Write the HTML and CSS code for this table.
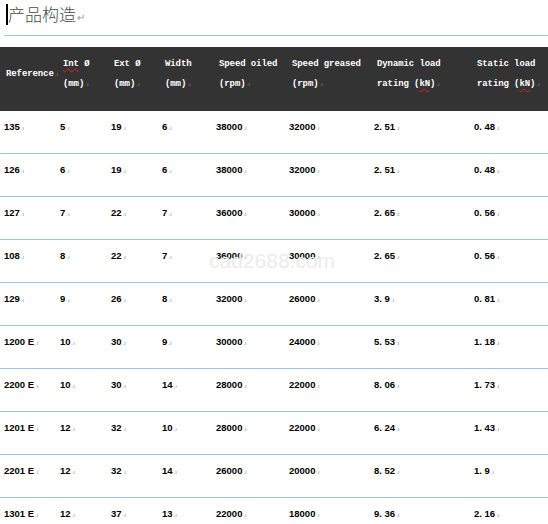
FILE: index.html
```html
<!DOCTYPE html>
<html>
<head>
<meta charset="utf-8">
<link rel="stylesheet" href="styles.css">
</head>
<body>
<div class="doc">
  <div class="title"><span class="caret"></span>产品构造<span class="ret">↵</span></div>
  <div class="table">
    <div class="row head">
      <div class="c single">Reference<span class="m">.ı</span></div>
      <div class="c"><span class="sp">Int</span> Ø<br>(mm)<span class="m">.ı</span></div>
      <div class="c">Ext Ø<br>(mm)<span class="m">.ı</span></div>
      <div class="c">Width<br>(mm)<span class="m">.ı</span></div>
      <div class="c">Speed oiled<br>(rpm)<span class="m">.ı</span></div>
      <div class="c">Speed greased<br>(rpm)<span class="m">.ı</span></div>
      <div class="c">Dynamic load<br>rating (<span class="sp">kN</span>)<span class="m">.ı</span></div>
      <div class="c">Static load<br>rating (<span class="sp">kN</span>)<span class="m">.ı</span></div>
    </div>
    <div class="row"><div class="c">135<span class="m">.ı</span></div><div class="c">5<span class="m">.ı</span></div><div class="c">19<span class="m">.ı</span></div><div class="c">6<span class="m">.ı</span></div><div class="c">38000<span class="m">.ı</span></div><div class="c">32000<span class="m">.ı</span></div><div class="c">2. 51<span class="m">.ı</span></div><div class="c">0. 48<span class="m">.ı</span></div></div>
    <div class="row"><div class="c">126<span class="m">.ı</span></div><div class="c">6<span class="m">.ı</span></div><div class="c">19<span class="m">.ı</span></div><div class="c">6<span class="m">.ı</span></div><div class="c">38000<span class="m">.ı</span></div><div class="c">32000<span class="m">.ı</span></div><div class="c">2. 51<span class="m">.ı</span></div><div class="c">0. 48<span class="m">.ı</span></div></div>
    <div class="row"><div class="c">127<span class="m">.ı</span></div><div class="c">7<span class="m">.ı</span></div><div class="c">22<span class="m">.ı</span></div><div class="c">7<span class="m">.ı</span></div><div class="c">36000<span class="m">.ı</span></div><div class="c">30000<span class="m">.ı</span></div><div class="c">2. 65<span class="m">.ı</span></div><div class="c">0. 56<span class="m">.ı</span></div></div>
    <div class="row"><div class="c">108<span class="m">.ı</span></div><div class="c">8<span class="m">.ı</span></div><div class="c">22<span class="m">.ı</span></div><div class="c">7<span class="m">.ı</span></div><div class="c">36000<span class="m">.ı</span></div><div class="c">30000<span class="m">.ı</span></div><div class="c">2. 65<span class="m">.ı</span></div><div class="c">0. 56<span class="m">.ı</span></div></div>
    <div class="row"><div class="c">129<span class="m">.ı</span></div><div class="c">9<span class="m">.ı</span></div><div class="c">26<span class="m">.ı</span></div><div class="c">8<span class="m">.ı</span></div><div class="c">32000<span class="m">.ı</span></div><div class="c">26000<span class="m">.ı</span></div><div class="c">3. 9<span class="m">.ı</span></div><div class="c">0. 81<span class="m">.ı</span></div></div>
    <div class="row"><div class="c">1200 E<span class="m">.ı</span></div><div class="c">10<span class="m">.ı</span></div><div class="c">30<span class="m">.ı</span></div><div class="c">9<span class="m">.ı</span></div><div class="c">30000<span class="m">.ı</span></div><div class="c">24000<span class="m">.ı</span></div><div class="c">5. 53<span class="m">.ı</span></div><div class="c">1. 18<span class="m">.ı</span></div></div>
    <div class="row"><div class="c">2200 E<span class="m">.ı</span></div><div class="c">10<span class="m">.ı</span></div><div class="c">30<span class="m">.ı</span></div><div class="c">14<span class="m">.ı</span></div><div class="c">28000<span class="m">.ı</span></div><div class="c">22000<span class="m">.ı</span></div><div class="c">8. 06<span class="m">.ı</span></div><div class="c">1. 73<span class="m">.ı</span></div></div>
    <div class="row"><div class="c">1201 E<span class="m">.ı</span></div><div class="c">12<span class="m">.ı</span></div><div class="c">32<span class="m">.ı</span></div><div class="c">10<span class="m">.ı</span></div><div class="c">28000<span class="m">.ı</span></div><div class="c">22000<span class="m">.ı</span></div><div class="c">6. 24<span class="m">.ı</span></div><div class="c">1. 43<span class="m">.ı</span></div></div>
    <div class="row"><div class="c">2201 E<span class="m">.ı</span></div><div class="c">12<span class="m">.ı</span></div><div class="c">32<span class="m">.ı</span></div><div class="c">14<span class="m">.ı</span></div><div class="c">26000<span class="m">.ı</span></div><div class="c">20000<span class="m">.ı</span></div><div class="c">8. 52<span class="m">.ı</span></div><div class="c">1. 9<span class="m">.ı</span></div></div>
    <div class="row"><div class="c">1301 E<span class="m">.ı</span></div><div class="c">12<span class="m">.ı</span></div><div class="c">37<span class="m">.ı</span></div><div class="c">13<span class="m">.ı</span></div><div class="c">22000<span class="m">.ı</span></div><div class="c">18000<span class="m">.ı</span></div><div class="c">9. 36<span class="m">.ı</span></div><div class="c">2. 16<span class="m">.ı</span></div></div>
  </div>
  <div class="wm">cad2688.com</div>
</div>
</body>
</html>
```

FILE: styles.css
```css
html, body {
  margin: 0;
  padding: 0;
  background: #ffffff;
  overflow: hidden;
}
.doc {
  position: relative;
  width: 548px;
  height: 524px;
  overflow: hidden;
}
.title {
  margin-left: 4px;
  height: 35px;
  border-bottom: 1px solid #9dc3e6;
  display: flex;
  align-items: flex-start;
  font-family: "Noto Sans CJK SC", sans-serif;
  font-size: 17px;
  line-height: 28px;
  color: #4a4a4a;
  font-weight: 300;
}
.caret {
  display: inline-block;
  width: 2px;
  height: 21px;
  background: #000;
  margin: 4px 0 0 2px;
}
.ret {
  font-size: 10px;
  color: #999;
  margin-left: 1px;
  line-height: 34px;
}
.table {
  margin-top: 11px;
}
.row {
  display: grid;
  grid-template-columns: 56px 51px 51px 54px 73px 85px 100px 1fr;
  padding-left: 4px;
  height: 42px;
  border-bottom: 1px solid #9dc3e6;
  box-sizing: content-box;
}
.row .c {
  padding-top: 9px;
  font-family: "Liberation Sans", Arial, sans-serif;
  font-weight: bold;
  font-size: 9.5px;
  line-height: 14px;
  color: #000;
  white-space: nowrap;
}
.row.head {
  background: #333333;
  border-bottom: none;
  align-items: center;
  padding-top: 7px;
  padding-bottom: 17px;
  height: 40px;
}
.row.head .c {
  padding-top: 0;
  padding-left: 3px;
  font-family: "Liberation Mono", "DejaVu Sans Mono", monospace;
  font-size: 9px;
  line-height: 20px;
  color: #ffffff;
  letter-spacing: -0.1px;
}
.row.head .c.single {
  padding-left: 2px;
}
.m {
  font-family: "Liberation Sans", sans-serif;
  font-weight: normal;
  font-size: 6px;
  color: #8a8a8a;
  margin-left: 1px;
  letter-spacing: 0;
}
.sp {
  text-decoration: underline wavy #e02020;
  text-decoration-thickness: 1px;
  text-underline-offset: 2px;
}
.wm {
  position: absolute;
  left: 209px;
  top: 249px;
  font-family: "Liberation Sans", Arial, sans-serif;
  font-size: 21px;
  line-height: 24px;
  color: #ececec;
  pointer-events: none;
}
```
